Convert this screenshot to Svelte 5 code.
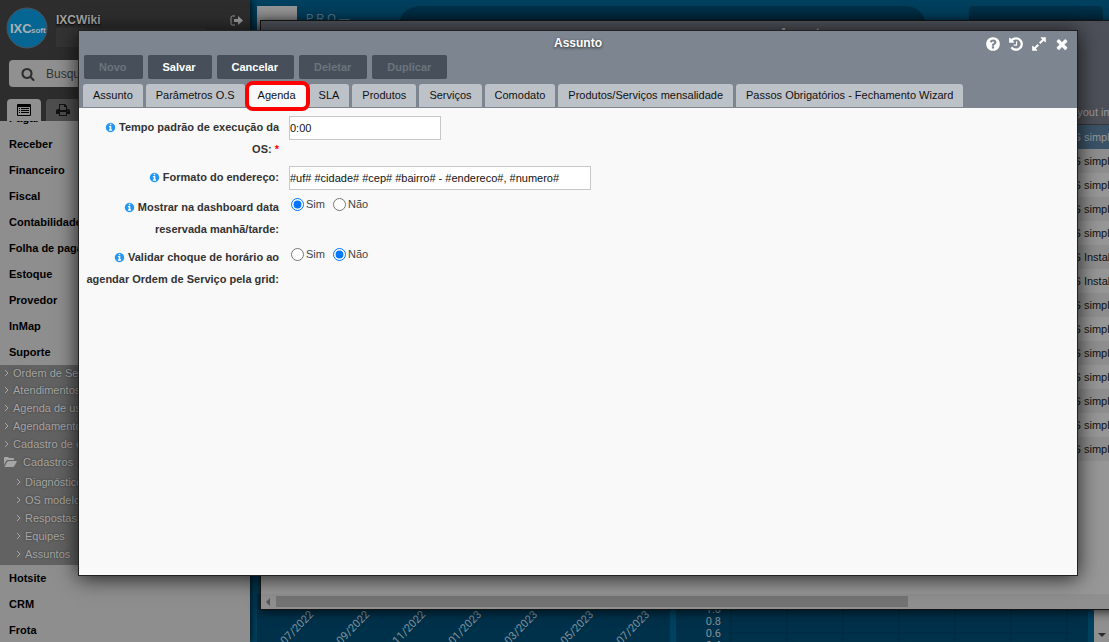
<script>
    const icons = {
        help: 'M1024 1376v-192q0-14-9-23t-23-9h-192q-14 0-23 9t-9 23v192q0 14 9 23t23 9h192q14 0 23-9t9-23zm256-672q0-88-55.5-163t-138.5-116-170-41q-243 0-371 213-15 24 8 42l132 100q7 6 19 6 16 0 25-12 53-68 86-92 34-24 86-24 48 0 85.5 26t37.5 59q0 38-20 61t-68 45q-63 28-115.5 86.5t-52.5 125.5v36q0 14 9 23t23 9h192q14 0 23-9t9-23q0-19 21.5-49.5t54.5-49.5q32-18 49-28.5t46-35 44.5-48 28-60.5 12.5-81zm384 192q0 209-103 385.5t-279.5 279.5-385.5 103-385.5-103-279.5-279.5-103-385.5 103-385.5 279.5-279.5 385.5-103 385.5 103 279.5 279.5 103 385.5z',
        history: 'M1664 896q0 156-61 298t-164 245-245 164-298 61q-172 0-327-72.5t-264-204.5q-7-10-6.5-22.5t8.5-20.5l137-138q10-9 25-9 16 2 23 12 73 95 179 147t225 52q104 0 198.5-40.5t163.5-109.5 109.5-163.5 40.5-198.5-40.5-198.5-109.5-163.5-163.5-109.5-198.5-40.5q-98 0-188 35.5t-160 101.5l137 138q31 30 14 69-17 40-59 40h-448q-26 0-45-19t-19-45v-448q0-42 40-59 39-17 69 14l130 129q107-101 244.5-156.5t284.5-55.5q156 0 298 61t245 164 164 245 61 298zm-640-288v448q0 14-9 23t-23 9h-320q-14 0-23-9t-9-23v-64q0-14 9-23t23-9h224v-352q0-14 9-23t23-9h64q14 0 23 9t9 23z',
        expand: 'M883 1056q0 13-10 23l-332 332 144 144q19 19 19 45t-19 45-45 19h-448q-26 0-45-19t-19-45v-448q0-26 19-45t45-19 45 19l144 144 332-332q10-10 23-10t23 10l114 114q10 10 10 23zm781-864v448q0 26-19 45t-45 19-45-19l-144-144-332 332q-10 10-23 10t-23-10l-114-114q-10-10-10-23t10-23l332-332-144-144q-19-19-19-45t19-45 45-19h448q26 0 45 19t19 45z',
        close: 'M1490 1322q0 40-28 68l-136 136q-28 28-68 28t-68-28l-294-294-294 294q-28 28-68 28t-68-28l-136-136q-28-28-28-68t28-68l294-294-294-294q-28-28-28-68t28-68l136-136q28-28 68-28t68 28l294 294 294-294q28-28 68-28t68 28l136 136q28 28 28 68t-28 68l-294 294 294 294q28 28 28 68z',
        info: 'M1152 1376v-160q0-14-9-23t-23-9h-96v-512q0-14-9-23t-23-9h-320q-14 0-23 9t-9 23v160q0 14 9 23t23 9h96v320h-96q-14 0-23 9t-9 23v160q0 14 9 23t23 9h448q14 0 23-9t9-23zm-128-896v-160q0-14-9-23t-23-9h-192q-14 0-23 9t-9 23v160q0 14 9 23t23 9h192q14 0 23-9t9-23zm640 416q0 209-103 385.5t-279.5 279.5-385.5 103-385.5-103-279.5-279.5-103-385.5 103-385.5 279.5-279.5 385.5-103 385.5 103 279.5 279.5 103 385.5z',
        search: 'M1216 832q0-185-131.5-316.5t-316.5-131.5-316.5 131.5-131.5 316.5 131.5 316.5 316.5 131.5 316.5-131.5 131.5-316.5zm512 832q0 52-38 90t-90 38q-54 0-90-38l-343-342q-179 124-399 124-143 0-273.5-55.5t-225-150-150-225-55.5-273.5 55.5-273.5 150-225 225-150 273.5-55.5 273.5 55.5 225 150 150 225 55.5 273.5q0 220-124 399l343 343q37 37 37 90z',
    };

    const modulesTop = ['Pagar', 'Receber', 'Financeiro', 'Fiscal', 'Contabilidade', 'Folha de pagamento', 'Estoque', 'Provedor', 'InMap', 'Suporte'];
    const modulesBottom = ['Hotsite', 'CRM', 'Frota'];
    const support = ['Ordem de Serviço', 'Atendimentos', 'Agenda de usuários', 'Agendamentos', 'Cadastro de equipes'];
    const records = ['Diagnósticos', 'OS modelo', 'Respostas', 'Equipes', 'Assuntos'];

    const layouts = ['OS simples', 'OS simples', 'OS simples', 'OS simples', 'OS simples', 'OS Instalação', 'OS Instalação', 'OS simples', 'OS simples', 'OS simples', 'OS simples', 'OS simples', 'OS simples', 'OS simples'];

    const months = ['07/2022', '09/2022', '11/2022', '01/2023', '03/2023', '05/2023', '07/2023'];
    const scale = ['1.0', '0.8', '0.6', '0.4'];

    const windowTools = [
        { icon: 'help', label: 'Ajuda' },
        { icon: 'history', label: 'Histórico' },
        { icon: 'expand', label: 'Maximizar' },
        { icon: 'close', label: 'Fechar' },
    ];

    const actions = [
        { label: 'Novo', disabled: true },
        { label: 'Salvar', disabled: false },
        { label: 'Cancelar', disabled: false },
        { label: 'Deletar', disabled: true },
        { label: 'Duplicar', disabled: true },
    ];

    const tabs = ['Assunto', 'Parâmetros O.S', 'Agenda', 'SLA', 'Produtos', 'Serviços', 'Comodato', 'Produtos/Serviços mensalidade', 'Passos Obrigatórios - Fechamento Wizard'];
    let activeTab = 'Agenda';

    let duration = '0:00';
    let addressFormat = '#uf# #cidade# #cep# #bairro# - #endereco#, #numero#';
    let showOnDashboard = 'S';
    let checkConflict = 'N';
</script>

<div class="app">
    <aside class="sidebar">
        <header class="account">
            <div class="profile">
                <svg class="logo" viewBox="0 0 42 42" aria-label="IXCsoft">
                    <circle cx="21" cy="21" r="20" />
                    <text x="4" y="26" class="logo-name">IXC</text>
                    <text x="25" y="26" class="logo-suffix">soft</text>
                </svg>
                <div class="who">
                    <strong>IXCWiki</strong>
                    <span class="company"></span>
                </div>
                <button class="logout" aria-label="Sair">
                    <svg viewBox="0 0 13 12">
                        <path class="door" d="M5 1H2.500Q1 1 1 2.500v6Q1 10 2.500 10H5" />
                        <path d="M4 4h4V1l5 4.500L8 10V7H4z" />
                    </svg>
                </button>
            </div>
            <label class="search">
                <svg viewBox="0 0 1792 1792"><path d={icons.search} /></svg>
                <input type="text" placeholder="Busque aqui" aria-label="Buscar" />
            </label>
            <div class="views">
                <button class="view current" aria-label="Menu">
                    <svg viewBox="0 0 14 12">
                        <path fill-rule="evenodd" d="M1 0h12q1 0 1 1v10q0 1-1 1H1q-1 0-1-1V1q0-1 1-1zM1 3v8h12V3zM2 4h1v1H2zM4 4h8v1H4zM2 6h1v1H2zM4 6h8v1H4zM2 8h1v1H2zM4 8h8v1H4z" />
                    </svg>
                </button>
                <button class="view" aria-label="Imprimir">
                    <svg viewBox="0 0 14 12">
                        <path fill-rule="evenodd" d="M3 0h6l2 2v3h1q2 0 2 2v3h-3v2H3v-2H0V7q0-2 2-2h1zM4 1v5h6V3H8V1zM4 8v3h6V8zM11.500 6.500v1h1v-1z" />
                    </svg>
                </button>
            </div>
        </header>
        <nav class="menu">
            <ul class="modules scrolled">
                {#each modulesTop as name}
                    <li><a href="#menu">{name}</a></li>
                {/each}
            </ul>
            <div class="open">
                <ul class="entries">
                    {#each support as name}
                        <li><a href="#menu"><svg viewBox="0 0 5 8"><path d="M1 1l3 3-3 3" /></svg>{name}</a></li>
                    {/each}
                    <li>
                        <a href="#menu" class="folder">
                            <svg viewBox="0 0 13 10"><path d="M0 8V1q0-1 1-1h3l1 1h4q1 0 1 1v1H4Q3 3 2 4zM1 9l2-4q1-1 2-1h8l-2 4q-1 2-2 2H1q-1 0 0-1z" /></svg>Cadastros
                        </a>
                    </li>
                </ul>
                <ul class="entries nested">
                    {#each records as name}
                        <li><a href="#menu"><svg viewBox="0 0 5 8"><path d="M1 1l3 3-3 3" /></svg>{name}</a></li>
                    {/each}
                </ul>
            </div>
            <ul class="modules">
                {#each modulesBottom as name}
                    <li><a href="#menu">{name}</a></li>
                {/each}
            </ul>
        </nav>
    </aside>

    <main class="desktop">
        <div class="topbar">
            <span class="avatar"></span>
            <span class="plan">P R O —</span>
            <div class="banner"></div>
            <div class="status"></div>
        </div>
        <div class="charts">
            <div class="chart">
                <svg class="plot">
                    {#each months as month, i}
                        <text class="tick" text-anchor="end" transform="translate({57 + i * 56}, 33) rotate(-46)">{month}</text>
                    {/each}
                </svg>
            </div>
            <div class="chart">
                <svg class="plot">
                    {#each scale as value, i}
                        <text class="tick" text-anchor="end" x="45" y={31 + i * 12}>{value}</text>
                        <line x1="52" x2="397" y1={27 + i * 12} y2={27 + i * 12} />
                    {/each}
                    {#each months as _, i}
                        <line x1={55 + i * 56} x2={55 + i * 56} y1="0" y2="60" />
                    {/each}
                </svg>
            </div>
            <div class="page-scroll"><svg viewBox="0 0 8 4"><path d="M0 0h8L4 4z" /></svg></div>
        </div>
    </main>

    <section class="list-window">
        <header class="list-title">Assuntos</header>
        <table>
            <thead>
                <tr><th class="rest"></th><th>Layout impressão</th></tr>
            </thead>
            <tbody>
                {#each layouts as layout, i}
                    <tr class:selected={i === 0}><td></td><td>{layout}</td></tr>
                {/each}
            </tbody>
        </table>
        <div class="list-scroll">
            <svg viewBox="0 0 4 8"><path d="M4 0v8L0 4z" /></svg>
            <span class="thumb"></span>
        </div>
    </section>

    <section class="window">
        <header class="window-head">
            <div class="titlebar">
                <h1>Assunto</h1>
                <div class="tools">
                    {#each windowTools as tool}
                        <button aria-label={tool.label}>
                            <svg viewBox="0 0 1792 1792"><path d={icons[tool.icon]} /></svg>
                        </button>
                    {/each}
                </div>
            </div>
            <div class="actions">
                {#each actions as action}
                    <button disabled={action.disabled}>{action.label}</button>
                {/each}
            </div>
            <div class="tabs">
                {#each tabs as tab}
                    <button class:active={tab === activeTab} on:click={() => (activeTab = tab)}>{tab}</button>
                {/each}
            </div>
        </header>

        <form class="fields">
            <label class="caption" for="duration">
                <svg viewBox="0 0 1792 1792"><path d={icons.info} /></svg>
                Tempo padrão de execução da OS:&nbsp;<span class="required">*</span>
            </label>
            <input id="duration" class="short" type="text" bind:value={duration} />

            <label class="caption" for="address">
                <svg viewBox="0 0 1792 1792"><path d={icons.info} /></svg>
                Formato do endereço:
            </label>
            <input id="address" class="long" type="text" bind:value={addressFormat} />

            <span class="caption" id="dashboard">
                <svg viewBox="0 0 1792 1792"><path d={icons.info} /></svg>
                Mostrar na dashboard data reservada manhã/tarde:
            </span>
            <div class="choices" role="radiogroup" aria-labelledby="dashboard">
                <label><input type="radio" name="dashboard" value="S" bind:group={showOnDashboard} />Sim</label>
                <label><input type="radio" name="dashboard" value="N" bind:group={showOnDashboard} />Não</label>
            </div>

            <span class="caption" id="conflict">
                <svg viewBox="0 0 1792 1792"><path d={icons.info} /></svg>
                Validar choque de horário ao agendar Ordem de Serviço pela grid:
            </span>
            <div class="choices" role="radiogroup" aria-labelledby="conflict">
                <label><input type="radio" name="conflict" value="S" bind:group={checkConflict} />Sim</label>
                <label><input type="radio" name="conflict" value="N" bind:group={checkConflict} />Não</label>
            </div>
        </form>
    </section>
</div>

<style>
    .app {
        display: flex;
        font-family: "Liberation Sans", Arial, sans-serif;
        font-size: 11px;
        height: 100vh;
        overflow: hidden;
        position: relative;
    }

    ul {
        list-style: none;
        margin: 0;
        padding: 0;
    }

    a {
        color: inherit;
        text-decoration: none;
    }

    button {
        border: 0;
        cursor: pointer;
        font-family: inherit;
        font-size: 11px;
        margin: 0;
        padding: 0;
    }

    svg {
        display: block;
        fill: currentColor;
    }

    /* sidebar */
    .sidebar {
        background: #8e8e8e;
        box-shadow: 0 0 8px #000;
        display: flex;
        flex: none;
        flex-direction: column;
        width: 250px;
        z-index: 1;
    }

    .account {
        background: #2d2d2d;
        flex: none;
    }

    .profile {
        display: flex;
        padding: 7px 7px 0 6px;
    }

    .logo {
        fill: #066693;
        height: 42px;
        stroke: #4b5257;
        width: 42px;
    }

    .logo text {
        fill: #a9b0b4;
        stroke: none;
    }

    .logo-name {
        font-size: 13px;
        font-weight: bold;
    }

    .logo-suffix {
        font-size: 8px;
        font-weight: bold;
    }

    .who {
        color: #a3a3a3;
        display: flex;
        flex: 1;
        flex-direction: column;
        font-size: 12px;
        gap: 1px;
        padding: 6px 0 0 8px;
        text-shadow: 0 1px 2px #000;
    }

    .company {
        background: #343434;
        height: 19px;
        width: 150px;
    }

    .logout {
        align-self: flex-start;
        background: none;
        color: #999;
        margin-top: 8px;
    }

    .logout svg {
        height: 12px;
        width: 13px;
    }

    .door {
        fill: none;
        stroke: currentColor;
    }

    .search {
        align-items: center;
        background: #909090;
        border-radius: 4px;
        color: #2d2d2d;
        display: flex;
        gap: 11px;
        height: 27px;
        margin: 11px 9px 0;
        padding-left: 12px;
    }

    .search svg {
        height: 14px;
        width: 14px;
    }

    .search input {
        background: none;
        border: 0;
        flex: 1;
        font: 12px "Liberation Sans", Arial, sans-serif;
        min-width: 0;
        padding: 0;
    }

    .search input::placeholder {
        color: #333;
        opacity: 1;
    }

    .views {
        display: flex;
        gap: 5px;
        padding: 12px 7px 0;
    }

    .view {
        align-items: center;
        background: #4e4e4e;
        border-radius: 4px 4px 0 0;
        color: #111;
        display: flex;
        height: 22px;
        justify-content: center;
        width: 34px;
    }

    .view.current {
        background: #909090;
        color: #000;
    }

    .view svg {
        height: 12px;
        width: 14px;
    }

    .menu {
        flex: 1;
        min-height: 0;
        overflow: hidden;
        white-space: nowrap;
    }

    .scrolled {
        margin-top: -16px;
    }

    .modules li {
        color: #000;
        font-weight: bold;
        line-height: 26px;
        padding-left: 9px;
    }

    .open {
        background: #626262;
        color: #a6a6a6;
        padding-bottom: 2px;
    }

    .entries li {
        line-height: 18px;
        padding-left: 4px;
        text-shadow: 0 0 2px #333;
    }

    .entries:not(.nested) li:first-child {
        line-height: 16px;
    }

    .entries a {
        align-items: center;
        display: flex;
        gap: 4px;
    }

    .entries svg {
        fill: none;
        height: 8px;
        stroke: currentColor;
        width: 5px;
    }

    .entries .folder {
        gap: 6px;
    }

    .entries .folder svg {
        fill: currentColor;
        height: 10px;
        stroke: none;
        width: 13px;
    }

    .nested {
        padding: 2px 0 0 12px;
    }

    /* desktop */
    .desktop {
        background: #00415f;
        display: flex;
        flex: 1;
        flex-direction: column;
        justify-content: space-between;
        min-width: 0;
    }

    .topbar {
        background: linear-gradient(#00415f, #003652);
        display: flex;
        height: 24px;
        padding: 6px 6px 0 7px;
    }

    .avatar {
        background: linear-gradient(#969696, #777);
        width: 40px;
    }

    .plan {
        color: #5f7684;
        line-height: 24px;
        margin-left: 9px;
        width: 93px;
    }

    .banner {
        background: linear-gradient(#00314a, #00202f);
        border-radius: 20px 20px 0 0;
        flex: 1;
        margin-right: 43px;
    }

    .status {
        background: linear-gradient(#00314a, #00202f);
        border-radius: 5px 5px 0 0;
        width: 134px;
    }

    .charts {
        display: flex;
        gap: 6px;
        height: 48px;
        padding-left: 7px;
    }

    .chart {
        background: #00314a;
        flex: 1;
        min-width: 0;
        overflow: hidden;
    }

    .plot {
        height: 60px;
        margin-top: -12px;
        width: 100%;
    }

    .tick {
        fill: #83939c;
        font-family: Roboto, sans-serif;
        font-size: 11px;
    }

    .plot line {
        stroke: #002a41;
    }

    .page-scroll {
        align-items: flex-end;
        background: #909090;
        box-sizing: border-box;
        color: #2b2b2b;
        display: flex;
        justify-content: center;
        padding-bottom: 5px;
        width: 15px;
    }

    .page-scroll svg {
        height: 4px;
        width: 8px;
    }

    /* window behind */
    .list-window {
        background: #979797;
        border: 1px solid #151515;
        bottom: 32px;
        box-shadow: 0 2px 10px rgba(0, 0, 0, 0.7);
        box-sizing: border-box;
        display: flex;
        flex-direction: column;
        left: 260px;
        overflow: hidden;
        position: absolute;
        right: -244px;
        top: 20px;
        z-index: 2;
    }

    .list-title {
        background: #4d5058;
        color: #aaa;
        flex: none;
        font-size: 12px;
        font-weight: bold;
        height: 79px;
        line-height: 25px;
        text-align: center;
    }

    table {
        border-collapse: collapse;
        table-layout: fixed;
        white-space: nowrap;
        width: 100%;
    }

    th,
    td {
        height: 24px;
        line-height: 24px;
        overflow: hidden;
        padding: 0 0 0 4px;
        text-align: left;
    }

    .rest {
        width: 796px;
    }

    th {
        background: #4d5058;
        border-bottom: 1px solid #33363b;
        color: #999;
        font-weight: normal;
    }

    td {
        background: #979797;
        color: #111;
    }

    tr:nth-child(even) td {
        background: #8e8e8e;
    }

    .selected td {
        background: #3b5368;
        color: #999;
    }

    .list-scroll {
        align-items: center;
        background: #8f8f8f;
        color: #555;
        display: flex;
        gap: 6px;
        height: 15px;
        margin-top: auto;
        padding-left: 5px;
    }

    .list-scroll svg {
        height: 8px;
        width: 4px;
    }

    .thumb {
        background: #737373;
        height: 11px;
        width: 632px;
    }

    /* front window */
    .window {
        background: #f9f9f9;
        border: 1px solid #222;
        bottom: 66px;
        box-shadow: 0 2px 20px rgba(0, 0, 0, 0.8);
        left: 78px;
        position: absolute;
        right: 31px;
        top: 30px;
        z-index: 3;
    }

    .window-head {
        background: #7d8690;
    }

    .titlebar {
        color: #fff;
        height: 24px;
        position: relative;
    }

    h1 {
        font-size: 12px;
        line-height: 24px;
        margin: 0;
        text-align: center;
        text-shadow: 0 1px 3px #222;
    }

    .tools {
        display: flex;
        gap: 7px;
        position: absolute;
        right: 7px;
        top: 5px;
    }

    .tools button {
        background: none;
        color: inherit;
    }

    .tools svg {
        height: 16px;
        width: 16px;
    }

    .actions {
        display: flex;
        gap: 5px;
        padding: 0 5px 5px;
    }

    .actions button {
        background: #47505a;
        border-radius: 2px;
        color: #fff;
        font-weight: bold;
        height: 24px;
        padding: 0 16px 0 15px;
    }

    .actions button:disabled {
        color: #6b747d;
    }

    .tabs {
        border-bottom: 1px solid #7d8690;
        display: flex;
        gap: 3px;
        padding: 0 4px;
    }

    .tabs button {
        background: #bdc2c9;
        border-radius: 3px 3px 0 0;
        color: #111;
        height: 23px;
        padding: 0 10px 2px;
    }

    .tabs .active {
        background: #f9f9f9;
        position: relative;
    }

    .tabs .active::after {
        border: 4px solid #f00;
        border-radius: 8px;
        content: "";
        inset: -3px -4px -4px -3px;
        position: absolute;
        z-index: 1;
    }

    .fields {
        align-items: start;
        display: grid;
        gap: 6px 10px;
        grid-template-columns: 200px 1fr;
        padding-top: 8px;
    }

    .caption {
        color: #333;
        font-weight: bold;
        line-height: 22px;
        text-align: right;
    }

    .caption svg {
        color: #2196f3;
        display: inline-block;
        height: 11px;
        vertical-align: -2px;
        width: 11px;
    }

    .required {
        color: #f00;
    }

    .short,
    .long {
        background: #fff;
        border: 1px solid #c8c8c8;
        box-sizing: border-box;
        color: #111;
        font: 11px "Liberation Sans", Arial, sans-serif;
        height: 24px;
        padding: 0;
    }

    .short {
        width: 152px;
    }

    .long {
        width: 302px;
    }

    .choices {
        color: #444;
        display: flex;
        gap: 8px;
        padding-left: 2px;
    }

    .choices label {
        align-items: center;
        display: flex;
        gap: 2px;
        height: 16px;
    }

    .choices input {
        height: 13px;
        margin: 0;
        width: 13px;
    }
</style>
